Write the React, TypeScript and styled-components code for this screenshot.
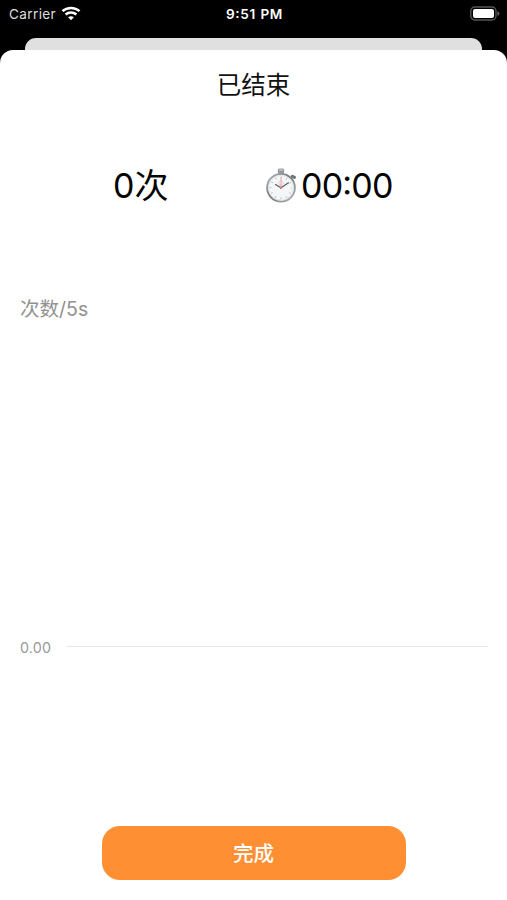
import React from "react";
import styled, { createGlobalStyle } from "styled-components";

const GlobalStyle = createGlobalStyle`
  * { box-sizing: border-box; }
  body {
    margin: 0;
    background: #000;
    font-family: Inter, "Noto Sans CJK SC", sans-serif;
  }
`;

const Screen = styled.div`
  display: flex;
  flex-direction: column;
  width: 507px;
  height: 900px;
  overflow: hidden;
  background: #000;
`;

const StatusBar = styled.header`
  display: grid;
  grid-template-columns: 1fr auto 1fr;
  align-items: center;
  height: 38px;
  padding: 0 7px 11px 9px;
  color: #fff;
  font-size: 13.5px;
  line-height: 18px;
`;

const Carrier = styled.div`
  display: flex;
  align-items: center;
  gap: 5px;
  color: #dedede;
  letter-spacing: 0.4px;
`;

const Clock = styled.div`
  font-size: 13.6px;
  font-weight: 600;
  font-feature-settings: "calt", "case";
  letter-spacing: 0.65px;
  word-spacing: 0.5px;
`;

const BatterySlot = styled.div`
  display: flex;
  justify-content: flex-end;
`;

const BackCard = styled.div`
  height: 12px;
  margin: 0 25px;
  border-radius: 11px 11px 0 0;
  background: #e0e0e0;
`;

const Sheet = styled.main`
  display: flex;
  flex: 1;
  flex-direction: column;
  border-radius: 13px 13px 0 0;
  background: #fff;
`;

const Title = styled.h1`
  margin: 17px 0 0;
  color: #111;
  font-size: 24.5px;
  font-weight: 400;
  line-height: 36px;
  text-align: center;
`;

const Stats = styled.section`
  display: flex;
  height: 50px;
  margin-top: 58px;
  padding-left: 113px;
  color: #050505;
  font-size: 34px;
  line-height: 50px;
`;

const Count = styled.div`
  width: 152px;
`;

const Elapsed = styled.div`
  display: flex;
  gap: 4px;
`;

const Digits = styled.span`
  font-feature-settings: "calt", "case";
  letter-spacing: -0.8px;
`;

const Chart = styled.section`
  height: 370px;
  margin-top: 83px;
  padding: 0 19px 0 20px;
`;

const ChartLabel = styled.div`
  height: 30px;
  color: #929292;
  font-size: 19.5px;
  line-height: 30px;
`;

const AxisRow = styled.div`
  display: flex;
  align-items: center;
  gap: 15px;
  height: 20px;
  margin-top: 313px;
`;

const AxisValue = styled.span`
  width: 31px;
  padding-top: 1px;
  color: #999;
  font-size: 14.3px;
  letter-spacing: 0.15px;
  line-height: 20px;
`;

const AxisLine = styled.div`
  flex: 1;
  height: 1px;
  margin-bottom: 1px;
  background: #e7e7e7;
`;

const DoneButton = styled.button`
  align-self: center;
  width: 304px;
  height: 54px;
  margin-top: 162px;
  padding: 1px 0 0;
  border: 0;
  border-radius: 18px;
  background: #ff8f32;
  color: #fff;
  font: 500 20.5px/53px Inter, "Noto Sans CJK SC", sans-serif;
`;

const WifiIcon = () => (
  <svg width="20" height="15" viewBox="0 0 20 15" fill="none" stroke="#fff" strokeWidth="2.5">
    <path d="M1.5 5.2C6.2.8 13.8.8 18.5 5.2" />
    <path d="M4.6 8.5c3-2.8 7.8-2.8 10.8 0" />
    <path d="M10 14.2 7.1 11.3c1.6-1.5 4.2-1.5 5.8 0Z" fill="#fff" stroke="none" />
  </svg>
);

const BatteryIcon = () => (
  <svg width="31" height="15" viewBox="0 0 31 15">
    <rect x="1.8" y="1" width="25.2" height="13" rx="4" fill="#000" stroke="#555" strokeWidth="1.4" />
    <rect x="4" y="3" width="21" height="9" rx="2" fill="#fff" />
    <path d="M28.4 5.2c2.7.8 2.7 3.8 0 4.6Z" fill="#666" />
  </svg>
);

const StopwatchIcon = () => (
  <svg width="32" height="50" viewBox="0 0 32 50">
    <defs>
      <linearGradient id="steel" x1="0" y1="0" x2="1" y2="1">
        <stop offset="0" stopColor="#b1b7b8" />
        <stop offset="0.45" stopColor="#737a7d" />
        <stop offset="1" stopColor="#b2b5b6" />
      </linearGradient>
    </defs>
    <path d="M14 11h4v5h-4Z" fill="#6e7678" />
    <rect x="12.8" y="7.5" width="6.4" height="5" rx="1.5" fill="#92999b" />
    <path d="M14 9h4" stroke="#c5cacb" strokeWidth="1.4" />
    <path d="m25 18.5 3-3" stroke="#7c8487" strokeWidth="2" />
    <path d="m27.3 15.2 2.2 1.2" stroke="#6c7578" strokeWidth="3" strokeLinecap="round" />
    <circle cx="16" cy="26.8" r="13.9" fill="#edf0f1" stroke="url(#steel)" strokeWidth="1.8" />
    <circle cx="16" cy="26.8" r="12.4" fill="#f5f6f7" stroke="#d5dadc" strokeWidth="0.6" />
    <circle cx="16" cy="26.8" r="10.5" fill="none" stroke="#b4bbbe" strokeWidth="2" strokeDasharray="0.8 4.698" strokeDashoffset="0.4" />
    <circle cx="16" cy="22" r="2.3" fill="none" stroke="#e8bfc2" strokeWidth="0.7" />
    <path d="M16 28V16" stroke="#eba3a9" strokeWidth="1" />
    <path d="m10.5 23.5 5.5 3.3 7.5-5" fill="none" stroke="#596164" strokeWidth="1.2" strokeLinecap="round" />
    <circle cx="16" cy="26.8" r="1.2" fill="#c77e83" />
  </svg>
);

export default function App() {
  return (
    <Screen>
      <GlobalStyle />
      <StatusBar>
        <Carrier>Carrier<WifiIcon /></Carrier>
        <Clock>9:51 PM</Clock>
        <BatterySlot><BatteryIcon /></BatterySlot>
      </StatusBar>
      <BackCard />
      <Sheet>
        <Title>已结束</Title>
        <Stats>
          <Count>0次</Count>
          <Elapsed><StopwatchIcon /><Digits>00:00</Digits></Elapsed>
        </Stats>
        <Chart>
          <ChartLabel>次数/5s</ChartLabel>
          <AxisRow><AxisValue>0.00</AxisValue><AxisLine /></AxisRow>
        </Chart>
        <DoneButton>完成</DoneButton>
      </Sheet>
    </Screen>
  );
}
